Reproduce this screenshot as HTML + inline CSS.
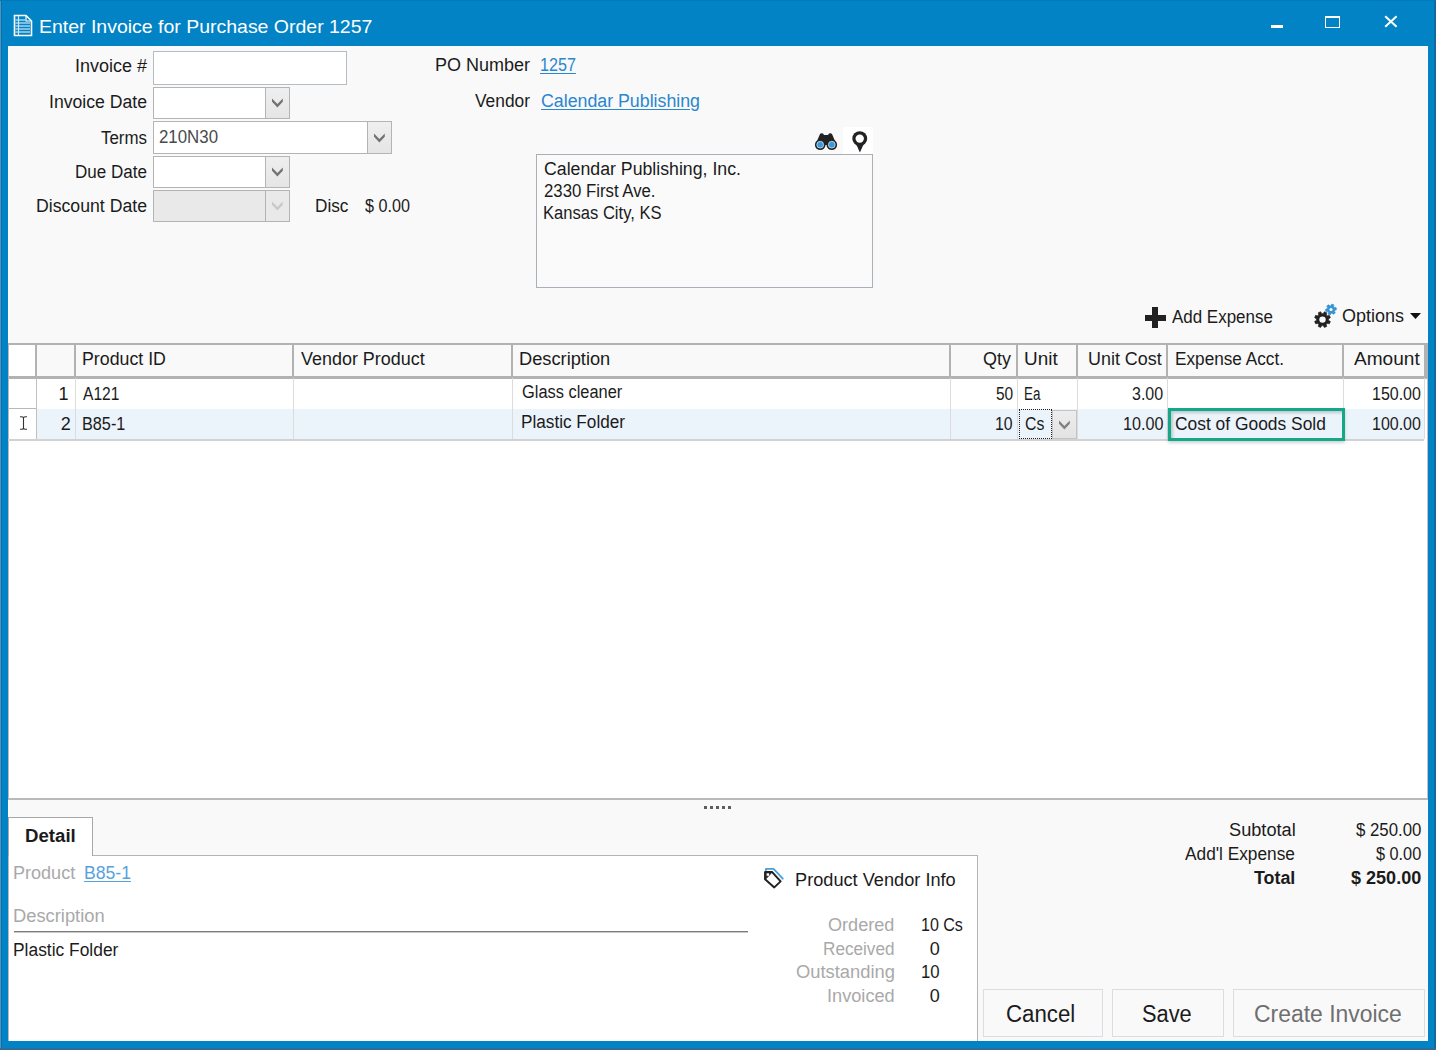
<!DOCTYPE html>
<html><head><meta charset="utf-8"><style>
html,body{margin:0;padding:0;width:1436px;height:1050px;overflow:hidden;position:relative;font-family:"Liberation Sans", sans-serif}
</style></head><body>
<div style="position:absolute;box-sizing:border-box;left:0px;top:0px;width:1436px;height:1050px;background:#0283c5"></div>
<div style="position:absolute;box-sizing:border-box;left:8px;top:46px;width:1420px;height:995px;background:#f9f9f9"></div>
<div style="position:absolute;box-sizing:border-box;left:0px;top:0px;width:1px;height:1050px;background:#5592ba"></div>
<div style="position:absolute;box-sizing:border-box;left:1px;top:0px;width:1px;height:1050px;background:#0073b3"></div>
<div style="position:absolute;box-sizing:border-box;left:1434px;top:0px;width:1px;height:1050px;background:#076ea7"></div>
<div style="position:absolute;box-sizing:border-box;left:1435px;top:0px;width:1px;height:1050px;background:#1b6391"></div>
<div style="position:absolute;box-sizing:border-box;left:0px;top:0px;width:1436px;height:1px;background:#0079b9"></div>
<div style="position:absolute;box-sizing:border-box;left:0px;top:1048px;width:1436px;height:2px;background:#2f6b93"></div>
<svg style="position:absolute;left:13px;top:14px" width="20" height="23" viewBox="0 0 20 23">
<path d="M1.5 1.5 H13 L18.5 7 V21.5 H1.5 Z" fill="none" stroke="#fff" stroke-width="1.6"/>
<path d="M13 1.5 V7 H18.5" fill="none" stroke="#fff" stroke-width="1.2"/>
<g stroke="#cfe6f4" stroke-width="1.2">
<line x1="2.5" y1="6" x2="12" y2="6"/><line x1="2.5" y1="9" x2="17" y2="9"/><line x1="2.5" y1="12" x2="17" y2="12"/>
<line x1="2.5" y1="15" x2="17" y2="15"/><line x1="2.5" y1="18" x2="17" y2="18"/>
<line x1="5.5" y1="2" x2="5.5" y2="21"/></g></svg>
<div style="position:absolute;box-sizing:border-box;left:1271px;top:25px;width:12px;height:3px;background:#fff"></div>
<div style="position:absolute;box-sizing:border-box;left:1325px;top:16px;width:15px;height:12px;border:1.5px solid #fff;border-top-width:2.5px;box-sizing:border-box"></div>
<svg style="position:absolute;left:1384px;top:15px" width="14" height="13" viewBox="0 0 14 13">
<path d="M1.2 1.3 L12.6 11.8 M12.6 1.3 L1.2 11.8" stroke="#fff" stroke-width="2"/></svg>
<div style="position:absolute;box-sizing:border-box;left:153px;top:51px;width:194px;height:34px;background:#ffffff;border:1px solid #b4bcc4;box-sizing:border-box"></div>
<div style="position:absolute;box-sizing:border-box;left:153px;top:87px;width:137px;height:32px;background:#ffffff;border:1px solid #b4b4b4;box-sizing:border-box"></div>
<div style="position:absolute;box-sizing:border-box;left:265px;top:88px;width:24px;height:30px;background:linear-gradient(#efefef,#e5e5e5);border-left:1px solid #b4b4b4"></div>
<svg style="position:absolute;left:271.60px;top:98.00px;overflow:visible" width="11" height="10" viewBox="0 0 11 10"><polygon points="0,0.4 5.4,5.9 10.8,0.4 10.8,3.8 5.4,9.4 0,3.8" fill="#737373"/></svg>
<div style="position:absolute;box-sizing:border-box;left:153px;top:121px;width:239px;height:33px;background:#ffffff;border:1px solid #b4b4b4;box-sizing:border-box"></div>
<div style="position:absolute;box-sizing:border-box;left:367px;top:122px;width:24px;height:31px;background:linear-gradient(#efefef,#e5e5e5);border-left:1px solid #b4b4b4"></div>
<svg style="position:absolute;left:373.60px;top:132.50px;overflow:visible" width="11" height="10" viewBox="0 0 11 10"><polygon points="0,0.4 5.4,5.9 10.8,0.4 10.8,3.8 5.4,9.4 0,3.8" fill="#737373"/></svg>
<div style="position:absolute;box-sizing:border-box;left:153px;top:156px;width:137px;height:32px;background:#ffffff;border:1px solid #b4b4b4;box-sizing:border-box"></div>
<div style="position:absolute;box-sizing:border-box;left:265px;top:157px;width:24px;height:30px;background:linear-gradient(#efefef,#e5e5e5);border-left:1px solid #b4b4b4"></div>
<svg style="position:absolute;left:271.60px;top:167.00px;overflow:visible" width="11" height="10" viewBox="0 0 11 10"><polygon points="0,0.4 5.4,5.9 10.8,0.4 10.8,3.8 5.4,9.4 0,3.8" fill="#737373"/></svg>
<div style="position:absolute;box-sizing:border-box;left:153px;top:190px;width:137px;height:32px;background:#e9e9e9;border:1px solid #b4b4b4;box-sizing:border-box"></div>
<div style="position:absolute;box-sizing:border-box;left:265px;top:191px;width:24px;height:30px;background:#e9e9e9;border-left:1px solid #b4b4b4"></div>
<svg style="position:absolute;left:271.60px;top:201.00px;overflow:visible" width="11" height="10" viewBox="0 0 11 10"><polygon points="0,0.4 5.4,5.9 10.8,0.4 10.8,3.8 5.4,9.4 0,3.8" fill="#c8c8c8"/></svg>
<div style="position:absolute;box-sizing:border-box;left:843px;top:127px;width:30px;height:27px;background:#ffffff"></div>
<div style="position:absolute;box-sizing:border-box;left:536px;top:154px;width:337px;height:134px;background:#fafafa;border:1px solid #a9b0b7;box-sizing:border-box"></div>
<svg style="position:absolute;left:814px;top:132px" width="24" height="19" viewBox="0 0 24 19">
<path d="M3 9 L6 2 Q7 1 9 1.5 L10 3 H14 L15 1.5 Q17 1 18 2 L21 9 L21 13 H3 Z" fill="#222"/>
<circle cx="6.2" cy="12.7" r="5.3" fill="#222"/><circle cx="17.8" cy="12.7" r="5.3" fill="#222"/>
<circle cx="6.2" cy="12.7" r="3.4" fill="#3a9ad9" stroke="#cfe3f1" stroke-width="0.8"/><circle cx="17.8" cy="12.7" r="3.4" fill="#3a9ad9" stroke="#cfe3f1" stroke-width="0.8"/>
</svg>
<svg style="position:absolute;left:851px;top:130px" width="18" height="23" viewBox="0 0 18 23">
<circle cx="8.75" cy="8.6" r="7.45" fill="#222"/><path d="M4.6 13 H13.2 L8.9 22.6 Z" fill="#222"/>
<circle cx="8.75" cy="8.6" r="4.2" fill="#fff"/></svg>
<div style="position:absolute;box-sizing:border-box;left:1152px;top:307px;width:6px;height:21px;background:#222"></div>
<div style="position:absolute;box-sizing:border-box;left:1145px;top:314.5px;width:21px;height:6.0px;background:#222"></div>
<svg style="position:absolute;left:1410px;top:313px" width="11" height="6" viewBox="0 0 11 6"><path d="M0 0 H11 L5.5 6 Z" fill="#111"/></svg>
<svg style="position:absolute;left:1300px;top:296px" width="44" height="40"><polygon points="23.08,17.63 24.39,15.72 26.73,16.69 26.32,18.97 27.13,19.78 29.41,19.37 30.38,21.71 28.47,23.02 28.47,24.18 30.38,25.49 29.41,27.83 27.13,27.42 26.32,28.23 26.73,30.51 24.39,31.48 23.08,29.57 21.92,29.57 20.61,31.48 18.27,30.51 18.68,28.23 17.87,27.42 15.59,27.83 14.62,25.49 16.53,24.18 16.53,23.02 14.62,21.71 15.59,19.37 17.87,19.78 18.68,18.97 18.27,16.69 20.61,15.72 21.92,17.63" fill="#222" stroke="#222" stroke-width="0.6" stroke-linejoin="round"/><circle cx="22.5" cy="23.6" r="3.2" fill="#f9f9f9"/><polygon points="30.73,9.71 31.77,8.05 33.91,8.84 33.64,10.77 34.15,11.38 36.10,11.44 36.50,13.69 34.69,14.42 34.42,15.17 35.33,16.89 33.58,18.36 32.05,17.15 31.27,17.29 30.23,18.95 28.09,18.16 28.36,16.23 27.85,15.62 25.90,15.56 25.50,13.31 27.31,12.58 27.58,11.83 26.67,10.11 28.42,8.64 29.95,9.85" fill="#3793d2" stroke="#3793d2" stroke-width="0.6" stroke-linejoin="round"/><circle cx="31" cy="13.5" r="1.6" fill="#f9f9f9"/></svg>
<div style="position:absolute;box-sizing:border-box;left:8px;top:343px;width:1420px;height:456px;background:#ffffff"></div>
<div style="position:absolute;box-sizing:border-box;left:8px;top:343px;width:1420px;height:456px;border-left:1px solid #bcb8b8;box-sizing:border-box"></div>
<div style="position:absolute;box-sizing:border-box;left:37px;top:344px;width:1387px;height:33px;background:#f9f9f9"></div>
<div style="position:absolute;box-sizing:border-box;left:8px;top:343px;width:1420px;height:2px;background:#b2b2b2"></div>
<div style="position:absolute;box-sizing:border-box;left:8px;top:376px;width:1420px;height:2.5px;background:#b2b2b2"></div>
<div style="position:absolute;box-sizing:border-box;left:35px;top:344px;width:2px;height:33px;background:#b2b2b2"></div>
<div style="position:absolute;box-sizing:border-box;left:74px;top:344px;width:2px;height:33px;background:#b2b2b2"></div>
<div style="position:absolute;box-sizing:border-box;left:292px;top:344px;width:2px;height:33px;background:#b2b2b2"></div>
<div style="position:absolute;box-sizing:border-box;left:511px;top:344px;width:2px;height:33px;background:#b2b2b2"></div>
<div style="position:absolute;box-sizing:border-box;left:949px;top:344px;width:2px;height:33px;background:#b2b2b2"></div>
<div style="position:absolute;box-sizing:border-box;left:1016px;top:344px;width:2px;height:33px;background:#b2b2b2"></div>
<div style="position:absolute;box-sizing:border-box;left:1076px;top:344px;width:2px;height:33px;background:#b2b2b2"></div>
<div style="position:absolute;box-sizing:border-box;left:1166px;top:344px;width:2px;height:33px;background:#b2b2b2"></div>
<div style="position:absolute;box-sizing:border-box;left:1342px;top:344px;width:2px;height:33px;background:#b2b2b2"></div>
<div style="position:absolute;box-sizing:border-box;left:1424px;top:343px;width:4px;height:35px;background:#b2b2b2"></div>
<div style="position:absolute;box-sizing:border-box;left:1424px;top:378px;width:1px;height:61px;background:#dcdcdc"></div>
<div style="position:absolute;box-sizing:border-box;left:1427px;top:378px;width:1px;height:421px;background:#c4c0c0"></div>
<div style="position:absolute;box-sizing:border-box;left:37px;top:409px;width:1387px;height:30px;background:#ebf3fb"></div>
<div style="position:absolute;box-sizing:border-box;left:8px;top:408px;width:29px;height:1px;background:#b8b8b8"></div>
<div style="position:absolute;box-sizing:border-box;left:8px;top:439px;width:1416px;height:1.5px;background:#d2d2d2"></div>
<div style="position:absolute;box-sizing:border-box;left:36px;top:378px;width:1px;height:61px;background:#dcdcdc"></div>
<div style="position:absolute;box-sizing:border-box;left:75px;top:378px;width:1px;height:61px;background:#dcdcdc"></div>
<div style="position:absolute;box-sizing:border-box;left:293px;top:378px;width:1px;height:61px;background:#dcdcdc"></div>
<div style="position:absolute;box-sizing:border-box;left:512px;top:378px;width:1px;height:61px;background:#dcdcdc"></div>
<div style="position:absolute;box-sizing:border-box;left:950px;top:378px;width:1px;height:61px;background:#dcdcdc"></div>
<div style="position:absolute;box-sizing:border-box;left:1017px;top:378px;width:1px;height:61px;background:#dcdcdc"></div>
<div style="position:absolute;box-sizing:border-box;left:1077px;top:378px;width:1px;height:61px;background:#dcdcdc"></div>
<div style="position:absolute;box-sizing:border-box;left:1167px;top:378px;width:1px;height:61px;background:#dcdcdc"></div>
<div style="position:absolute;box-sizing:border-box;left:1343px;top:378px;width:1px;height:61px;background:#dcdcdc"></div>
<div style="position:absolute;box-sizing:border-box;left:36px;top:378px;width:1px;height:61px;background:#c0c0c0"></div>
<svg style="position:absolute;left:19px;top:416px" width="9" height="14" viewBox="0 0 9 14"><path d="M1 0.8 Q4.5 0.5 4.5 2 V12 Q4.5 13.5 1 13.2 M8 0.8 Q4.5 0.5 4.5 2 M8 13.2 Q4.5 13.5 4.5 12" fill="none" stroke="#333" stroke-width="1.1"/></svg>
<div style="position:absolute;box-sizing:border-box;left:1019px;top:409px;width:33px;height:30px;border:1px dotted #222;box-sizing:border-box"></div>
<div style="position:absolute;box-sizing:border-box;left:1052px;top:410px;width:25px;height:28.5px;background:linear-gradient(#ededed,#e3e3e3);border:1px solid #c4c4c4;box-sizing:border-box"></div>
<svg style="position:absolute;left:1059.10px;top:419.60px;overflow:visible" width="11" height="10" viewBox="0 0 11 10"><polygon points="0,0.4 5.4,5.9 10.8,0.4 10.8,3.8 5.4,9.4 0,3.8" fill="#808080"/></svg>
<div style="position:absolute;box-sizing:border-box;left:1168px;top:408px;width:177px;height:33px;border:3px solid #14a788;box-sizing:border-box;box-shadow:inset 2px 2px 3px rgba(0,0,0,0.18), 0px 2px 3px rgba(0,0,0,0.18)"></div>
<div style="position:absolute;box-sizing:border-box;left:8px;top:798px;width:1420px;height:1.5px;background:#b9b9b9"></div>
<div style="position:absolute;box-sizing:border-box;left:704px;top:806px;width:3px;height:3px;background:#5e5e5e"></div>
<div style="position:absolute;box-sizing:border-box;left:710px;top:806px;width:3px;height:3px;background:#5e5e5e"></div>
<div style="position:absolute;box-sizing:border-box;left:716px;top:806px;width:3px;height:3px;background:#5e5e5e"></div>
<div style="position:absolute;box-sizing:border-box;left:722px;top:806px;width:3px;height:3px;background:#5e5e5e"></div>
<div style="position:absolute;box-sizing:border-box;left:728px;top:806px;width:3px;height:3px;background:#5e5e5e"></div>
<div style="position:absolute;box-sizing:border-box;left:8px;top:855px;width:970px;height:186px;background:#ffffff;border-top:1px solid #b4b4b4;border-right:1px solid #b4b4b4;border-left:1px solid #bcb8b8;box-sizing:border-box"></div>
<div style="position:absolute;box-sizing:border-box;left:8px;top:817px;width:85px;height:39px;background:#ffffff;border-top:1px solid #a8a8a8;border-right:1px solid #a8a8a8;border-left:1px solid #a8a8a8;box-sizing:border-box"></div>
<div style="position:absolute;box-sizing:border-box;left:14px;top:931px;width:734px;height:1px;background:#7c7c7c"></div>
<div style="position:absolute;box-sizing:border-box;left:14px;top:932px;width:734px;height:1px;background:#c8c8c8"></div>
<svg style="position:absolute;left:756px;top:862px" width="36" height="32" viewBox="0 0 36 32">
<path d="M10 8.8 V6.9 H17.6 L26.6 16.4 V17.5" fill="none" stroke="#4aa0dc" stroke-width="1.9" stroke-linejoin="round"/>
<path d="M9.1 10.1 H16.2 L24.6 19.4 L18.3 25.4 L9.1 17.2 Z" fill="#fff" stroke="#222" stroke-width="2" stroke-linejoin="round"/>
<path d="M9.1 10.1 H16.2 L9.1 17.6 Z" fill="#222" stroke="#222" stroke-width="1" stroke-linejoin="round"/>
<rect x="10.6" y="11.3" width="2.5" height="2.5" fill="#fff"/>
</svg>
<div style="position:absolute;box-sizing:border-box;left:983px;top:989px;width:120px;height:48px;background:#f9f9fa;border:1px solid #dcdde3;box-sizing:border-box"></div>
<div style="position:absolute;box-sizing:border-box;left:1112px;top:989px;width:112px;height:48px;background:#f9f9fa;border:1px solid #dcdde3;box-sizing:border-box"></div>
<div style="position:absolute;box-sizing:border-box;left:1233px;top:989px;width:192px;height:48px;background:#f9f9fa;border:1px solid #dcdde3;box-sizing:border-box"></div>
<div style="position:absolute;left:38.95px;top:18.34px;font-size:18.5px;line-height:18.5px;font-weight:400;color:#ffffff;white-space:pre;transform:scaleX(1.0525);transform-origin:0 0;">Enter Invoice for Purchase Order 1257</div>
<div style="position:absolute;left:75.00px;top:56.76px;font-size:18px;line-height:18px;font-weight:400;color:#1b1b1b;white-space:pre;">Invoice #</div>
<div style="position:absolute;left:49.02px;top:93.26px;font-size:18px;line-height:18px;font-weight:400;color:#1b1b1b;white-space:pre;transform:scaleX(0.9794);transform-origin:0 0;">Invoice Date</div>
<div style="position:absolute;left:101.00px;top:128.76px;font-size:18px;line-height:18px;font-weight:400;color:#1b1b1b;white-space:pre;transform:scaleX(0.9388);transform-origin:0 0;">Terms</div>
<div style="position:absolute;left:75.05px;top:162.76px;font-size:18px;line-height:18px;font-weight:400;color:#1b1b1b;white-space:pre;transform:scaleX(0.9463);transform-origin:0 0;">Due Date</div>
<div style="position:absolute;left:36.02px;top:197.46px;font-size:18px;line-height:18px;font-weight:400;color:#1b1b1b;white-space:pre;transform:scaleX(0.9818);transform-origin:0 0;">Discount Date</div>
<div style="position:absolute;left:159.00px;top:127.76px;font-size:18px;line-height:18px;font-weight:400;color:#4a4a4a;white-space:pre;transform:scaleX(0.9359);transform-origin:0 0;">210N30</div>
<div style="position:absolute;left:314.54px;top:197.06px;font-size:18px;line-height:18px;font-weight:400;color:#1b1b1b;white-space:pre;transform:scaleX(0.9559);transform-origin:0 0;">Disc</div>
<div style="position:absolute;left:364.60px;top:197.06px;font-size:18px;line-height:18px;font-weight:400;color:#1b1b1b;white-space:pre;transform:scaleX(0.8974);transform-origin:0 0;">$ 0.00</div>
<div style="position:absolute;left:435.00px;top:55.76px;font-size:18px;line-height:18px;font-weight:400;color:#1b1b1b;white-space:pre;">PO Number</div>
<div style="position:absolute;left:540.10px;top:55.76px;font-size:18px;line-height:18px;font-weight:400;color:#2a86cf;white-space:pre;transform:scaleX(0.8967);transform-origin:0 0;text-decoration:underline;text-underline-offset:2px;">1257</div>
<div style="position:absolute;left:475.00px;top:92.06px;font-size:18px;line-height:18px;font-weight:400;color:#1b1b1b;white-space:pre;transform:scaleX(0.9640);transform-origin:0 0;">Vendor</div>
<div style="position:absolute;left:541.00px;top:92.06px;font-size:18px;line-height:18px;font-weight:400;color:#2a86cf;white-space:pre;transform:scaleX(0.9869);transform-origin:0 0;text-decoration:underline;text-underline-offset:2px;">Calendar Publishing</div>
<div style="position:absolute;left:544.00px;top:159.76px;font-size:18px;line-height:18px;font-weight:400;color:#1b1b1b;white-space:pre;transform:scaleX(0.9843);transform-origin:0 0;">Calendar Publishing, Inc.</div>
<div style="position:absolute;left:544.00px;top:182.16px;font-size:18px;line-height:18px;font-weight:400;color:#1b1b1b;white-space:pre;transform:scaleX(0.9313);transform-origin:0 0;">2330 First Ave.</div>
<div style="position:absolute;left:543.08px;top:204.36px;font-size:18px;line-height:18px;font-weight:400;color:#1b1b1b;white-space:pre;transform:scaleX(0.9208);transform-origin:0 0;">Kansas City, KS</div>
<div style="position:absolute;left:1171.50px;top:307.76px;font-size:18px;line-height:18px;font-weight:400;color:#1b1b1b;white-space:pre;transform:scaleX(0.9415);transform-origin:0 0;">Add Expense</div>
<div style="position:absolute;left:1342.00px;top:307.16px;font-size:18px;line-height:18px;font-weight:400;color:#1b1b1b;white-space:pre;">Options</div>
<div style="position:absolute;left:82.31px;top:350.26px;font-size:18px;line-height:18px;font-weight:400;color:#1b1b1b;white-space:pre;transform:scaleX(0.9865);transform-origin:0 0;">Product ID</div>
<div style="position:absolute;left:300.50px;top:350.26px;font-size:18px;line-height:18px;font-weight:400;color:#1b1b1b;white-space:pre;transform:scaleX(0.9969);transform-origin:0 0;">Vendor Product</div>
<div style="position:absolute;left:518.79px;top:350.26px;font-size:18px;line-height:18px;font-weight:400;color:#1b1b1b;white-space:pre;transform:scaleX(1.0134);transform-origin:0 0;">Description</div>
<div style="position:absolute;left:983.10px;top:350.26px;font-size:18px;line-height:18px;font-weight:400;color:#1b1b1b;white-space:pre;transform:scaleX(0.9964);transform-origin:0 0;">Qty</div>
<div style="position:absolute;left:1024.15px;top:350.26px;font-size:18px;line-height:18px;font-weight:400;color:#1b1b1b;white-space:pre;transform:scaleX(1.0513);transform-origin:0 0;">Unit</div>
<div style="position:absolute;left:1087.80px;top:350.26px;font-size:18px;line-height:18px;font-weight:400;color:#1b1b1b;white-space:pre;transform:scaleX(0.9956);transform-origin:0 0;">Unit Cost</div>
<div style="position:absolute;left:1174.84px;top:350.26px;font-size:18px;line-height:18px;font-weight:400;color:#1b1b1b;white-space:pre;transform:scaleX(0.9553);transform-origin:0 0;">Expense Acct.</div>
<div style="position:absolute;left:1353.70px;top:350.26px;font-size:18px;line-height:18px;font-weight:400;color:#1b1b1b;white-space:pre;transform:scaleX(1.0591);transform-origin:0 0;">Amount</div>
<div style="position:absolute;left:58.50px;top:384.76px;font-size:18px;line-height:18px;font-weight:400;color:#1b1b1b;white-space:pre;">1</div>
<div style="position:absolute;left:83.10px;top:384.76px;font-size:18px;line-height:18px;font-weight:400;color:#1b1b1b;white-space:pre;transform:scaleX(0.8661);transform-origin:0 0;">A121</div>
<div style="position:absolute;left:522.00px;top:383.26px;font-size:18px;line-height:18px;font-weight:400;color:#1b1b1b;white-space:pre;transform:scaleX(0.9105);transform-origin:0 0;">Glass cleaner</div>
<div style="position:absolute;left:995.50px;top:384.76px;font-size:18px;line-height:18px;font-weight:400;color:#1b1b1b;white-space:pre;transform:scaleX(0.8595);transform-origin:0 0;">50</div>
<div style="position:absolute;left:1024.45px;top:384.76px;font-size:18px;line-height:18px;font-weight:400;color:#1b1b1b;white-space:pre;transform:scaleX(0.7453);transform-origin:0 0;">Ea</div>
<div style="position:absolute;left:1131.90px;top:384.76px;font-size:18px;line-height:18px;font-weight:400;color:#1b1b1b;white-space:pre;transform:scaleX(0.8880);transform-origin:0 0;">3.00</div>
<div style="position:absolute;left:1371.51px;top:384.76px;font-size:18px;line-height:18px;font-weight:400;color:#1b1b1b;white-space:pre;transform:scaleX(0.8882);transform-origin:0 0;">150.00</div>
<div style="position:absolute;left:60.70px;top:414.76px;font-size:18px;line-height:18px;font-weight:400;color:#1b1b1b;white-space:pre;">2</div>
<div style="position:absolute;left:82.40px;top:414.76px;font-size:18px;line-height:18px;font-weight:400;color:#1b1b1b;white-space:pre;transform:scaleX(0.9017);transform-origin:0 0;">B85-1</div>
<div style="position:absolute;left:521.05px;top:413.26px;font-size:18px;line-height:18px;font-weight:400;color:#1b1b1b;white-space:pre;transform:scaleX(0.9542);transform-origin:0 0;">Plastic Folder</div>
<div style="position:absolute;left:995.12px;top:414.76px;font-size:18px;line-height:18px;font-weight:400;color:#1b1b1b;white-space:pre;transform:scaleX(0.8785);transform-origin:0 0;">10</div>
<div style="position:absolute;left:1025.20px;top:414.76px;font-size:18px;line-height:18px;font-weight:400;color:#1b1b1b;white-space:pre;transform:scaleX(0.8773);transform-origin:0 0;">Cs</div>
<div style="position:absolute;left:1122.60px;top:414.76px;font-size:18px;line-height:18px;font-weight:400;color:#1b1b1b;white-space:pre;transform:scaleX(0.8971);transform-origin:0 0;">10.00</div>
<div style="position:absolute;left:1175.40px;top:414.76px;font-size:18px;line-height:18px;font-weight:400;color:#1b1b1b;white-space:pre;transform:scaleX(0.9666);transform-origin:0 0;">Cost of Goods Sold</div>
<div style="position:absolute;left:1371.51px;top:414.76px;font-size:18px;line-height:18px;font-weight:400;color:#1b1b1b;white-space:pre;transform:scaleX(0.8882);transform-origin:0 0;">100.00</div>
<div style="position:absolute;left:25.46px;top:826.76px;font-size:18px;line-height:18px;font-weight:700;color:#1b1b1b;white-space:pre;transform:scaleX(1.0358);transform-origin:0 0;">Detail</div>
<div style="position:absolute;left:13.00px;top:863.96px;font-size:18px;line-height:18px;font-weight:400;color:#a9a9a9;white-space:pre;transform:scaleX(1.0027);transform-origin:0 0;">Product</div>
<div style="position:absolute;left:84.02px;top:863.96px;font-size:18px;line-height:18px;font-weight:400;color:#58a2db;white-space:pre;transform:scaleX(0.9783);transform-origin:0 0;text-decoration:underline;text-underline-offset:2px;">B85-1</div>
<div style="position:absolute;left:12.98px;top:906.76px;font-size:18px;line-height:18px;font-weight:400;color:#a9a9a9;white-space:pre;transform:scaleX(1.0179);transform-origin:0 0;">Description</div>
<div style="position:absolute;left:13.03px;top:940.56px;font-size:18px;line-height:18px;font-weight:400;color:#1b1b1b;white-space:pre;transform:scaleX(0.9663);transform-origin:0 0;">Plastic Folder</div>
<div style="position:absolute;left:794.59px;top:870.56px;font-size:18px;line-height:18px;font-weight:400;color:#1b1b1b;white-space:pre;transform:scaleX(1.0101);transform-origin:0 0;">Product Vendor Info</div>
<div style="position:absolute;left:828.00px;top:915.76px;font-size:18px;line-height:18px;font-weight:400;color:#a9a9a9;white-space:pre;transform:scaleX(1.0058);transform-origin:0 0;">Ordered</div>
<div style="position:absolute;left:822.85px;top:939.56px;font-size:18px;line-height:18px;font-weight:400;color:#a9a9a9;white-space:pre;transform:scaleX(0.9530);transform-origin:0 0;">Received</div>
<div style="position:absolute;left:795.60px;top:963.36px;font-size:18px;line-height:18px;font-weight:400;color:#a9a9a9;white-space:pre;transform:scaleX(1.0182);transform-origin:0 0;">Outstanding</div>
<div style="position:absolute;left:826.69px;top:987.16px;font-size:18px;line-height:18px;font-weight:400;color:#a9a9a9;white-space:pre;transform:scaleX(1.0103);transform-origin:0 0;">Invoiced</div>
<div style="position:absolute;left:921.11px;top:915.76px;font-size:18px;line-height:18px;font-weight:400;color:#1b1b1b;white-space:pre;transform:scaleX(0.8909);transform-origin:0 0;">10 Cs</div>
<div style="position:absolute;left:929.70px;top:939.56px;font-size:18px;line-height:18px;font-weight:400;color:#1b1b1b;white-space:pre;">0</div>
<div style="position:absolute;left:921.07px;top:963.36px;font-size:18px;line-height:18px;font-weight:400;color:#1b1b1b;white-space:pre;transform:scaleX(0.9311);transform-origin:0 0;">10</div>
<div style="position:absolute;left:929.70px;top:987.16px;font-size:18px;line-height:18px;font-weight:400;color:#1b1b1b;white-space:pre;">0</div>
<div style="position:absolute;left:1228.80px;top:820.76px;font-size:18px;line-height:18px;font-weight:400;color:#1b1b1b;white-space:pre;transform:scaleX(1.0100);transform-origin:0 0;">Subtotal</div>
<div style="position:absolute;left:1184.60px;top:845.16px;font-size:18px;line-height:18px;font-weight:400;color:#1b1b1b;white-space:pre;transform:scaleX(0.9598);transform-origin:0 0;">Add'l Expense</div>
<div style="position:absolute;left:1254.20px;top:868.76px;font-size:18px;line-height:18px;font-weight:700;color:#1b1b1b;white-space:pre;transform:scaleX(0.9912);transform-origin:0 0;">Total</div>
<div style="position:absolute;left:1356.00px;top:820.76px;font-size:18px;line-height:18px;font-weight:400;color:#1b1b1b;white-space:pre;transform:scaleX(0.9335);transform-origin:0 0;">$ 250.00</div>
<div style="position:absolute;left:1376.20px;top:845.16px;font-size:18px;line-height:18px;font-weight:400;color:#1b1b1b;white-space:pre;transform:scaleX(0.9034);transform-origin:0 0;">$ 0.00</div>
<div style="position:absolute;left:1351.20px;top:868.76px;font-size:18px;line-height:18px;font-weight:700;color:#1b1b1b;white-space:pre;transform:scaleX(1.0021);transform-origin:0 0;">$ 250.00</div>
<div style="position:absolute;left:1006.33px;top:1003.13px;font-size:23px;line-height:23px;font-weight:400;color:#1b1b1b;white-space:pre;transform:scaleX(0.9671);transform-origin:0 0;">Cancel</div>
<div style="position:absolute;left:1141.65px;top:1003.13px;font-size:23px;line-height:23px;font-weight:400;color:#1b1b1b;white-space:pre;transform:scaleX(0.9480);transform-origin:0 0;">Save</div>
<div style="position:absolute;left:1253.90px;top:1003.13px;font-size:23px;line-height:23px;font-weight:400;color:#6f6f6f;white-space:pre;transform:scaleX(0.9965);transform-origin:0 0;">Create Invoice</div>
</body></html>
